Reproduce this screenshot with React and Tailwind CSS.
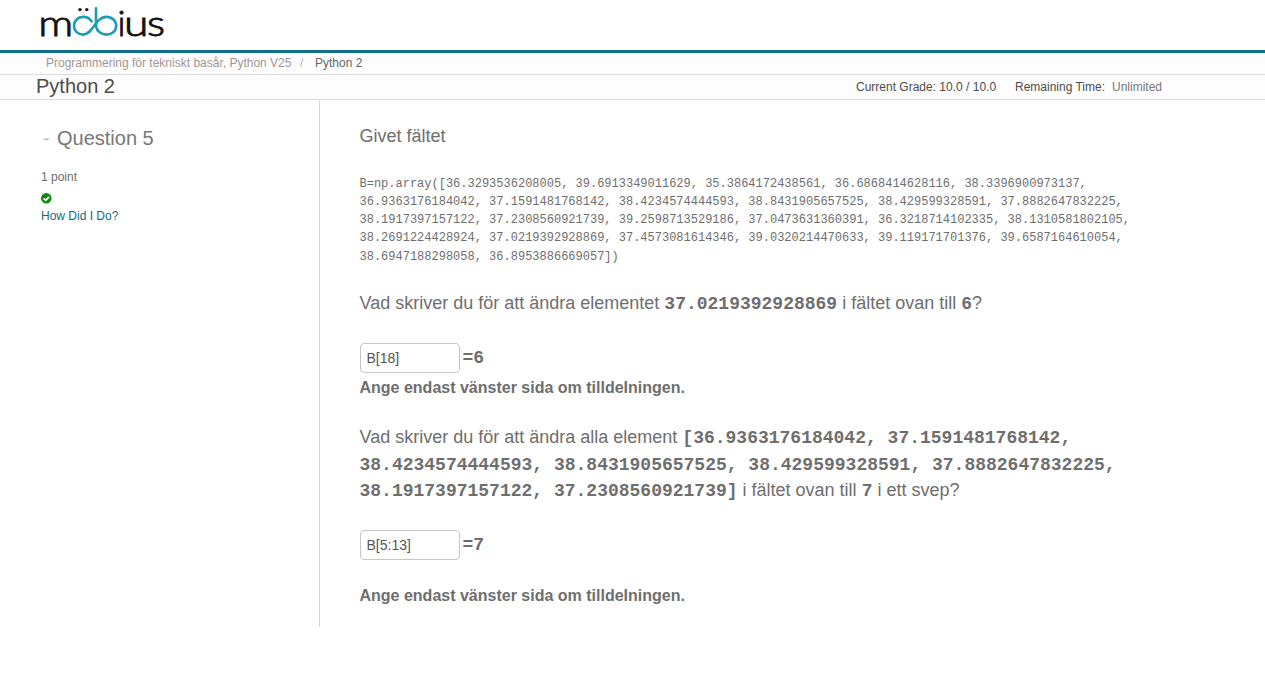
import React from "react";

const sans = "font-['Liberation_Sans',Arial,sans-serif]";
const mono = "font-['Liberation_Mono','Courier_New',monospace]";

const arrayLines = [
  "B=np.array([36.3293536208005, 39.6913349011629, 35.3864172438561, 36.6868414628116, 38.3396900973137,",
  "36.9363176184042, 37.1591481768142, 38.4234574444593, 38.8431905657525, 38.429599328591, 37.8882647832225,",
  "38.1917397157122, 37.2308560921739, 39.2598713529186, 37.0473631360391, 36.3218714102335, 38.1310581802105,",
  "38.2691224428924, 37.0219392928869, 37.4573081614346, 39.0320214470633, 39.119171701376, 39.6587164610054,",
  "38.6947188298058, 36.8953886669057])",
];

function Logo() {
  return (
    <svg width="134" height="48" viewBox="36 0 134 48" role="img" aria-label="möbius">
      <g fill="#111" stroke="#111" strokeWidth="0.9" fontFamily="Lato, sans-serif" fontWeight="300" fontSize="36">
        <text x="38.2" y="35.5" textLength="35" lengthAdjust="spacingAndGlyphs">m</text>
        <text x="117.5" y="35.5">i</text>
        <text x="124" y="35.5" textLength="24.5" lengthAdjust="spacingAndGlyphs">u</text>
        <text x="147" y="35.5" textLength="18" lengthAdjust="spacingAndGlyphs">s</text>
      </g>
      <circle cx="80" cy="9.6" r="1.7" fill="#111" />
      <circle cx="86.8" cy="9.6" r="1.7" fill="#111" />
      <g fill="none" stroke="#1f9bb3" strokeWidth="2.6" strokeLinecap="round">
        <path d="M91.6 21.4 C89.7 18.2 86.8 16.9 83.2 16.9 C77.8 16.9 74 20.8 74 25.8 C74 30.8 77.8 34.6 83.2 34.6 C93 34.6 95 16.9 106.4 16.9 C112.2 16.9 116.2 20.8 116.2 25.8 C116.2 30.8 112.2 34.6 106.6 34.6 C102.6 34.6 99.5 32.6 97.4 30" />
        <path d="M96 8.3 V24 C96 27 96.2 28.4 97.4 30" />
      </g>
    </svg>
  );
}

function Code({ children }) {
  return <b className={`${mono} leading-none`}>{children}</b>;
}

function Answer({ value, result }) {
  return (
    <div className="flex h-[30px] items-center">
      <input
        className={`${sans} h-[30px] w-[100px] rounded-[4px] border border-[#c6c6c6] bg-white px-1.5 text-[14px] text-[#555] outline-none`}
        defaultValue={value}
      />
      <b className={`${mono} ml-[3px] text-[18px] leading-[26px]`}>{result}</b>
    </div>
  );
}

export default function App() {
  return (
    <div className={`${sans} min-h-[691px] bg-white text-[#6e6e6e]`}>
      <header className="h-[53px] border-b-[3px] border-[#11708a] pl-[36px]">
        <Logo />
      </header>
      <nav className="flex h-[22px] items-center border-b border-[#dcdcdc] bg-[#fdfdfd] pb-[2px] pl-[46px] text-[12px]">
        <span className="w-[254px] whitespace-nowrap text-[#a09797]">Programmering för tekniskt basår, Python V25</span>
        <span className="w-[15px] text-[#bbb]">/</span>
        <span className="text-[#666]">Python 2</span>
      </nav>
      <div className="flex h-[25px] items-center border-b border-[#dcdcdc] bg-[#fdfdfd] pl-9 text-[12px] text-[#4c4c4c]">
        <h1 className="w-[820px] pb-[2px] text-[20px] leading-[22px]">Python 2</h1>
        <span className="w-[159px] whitespace-nowrap">Current Grade: 10.0 / 10.0</span>
        <span className="w-[97px] whitespace-nowrap">Remaining Time:</span>
        <span className="text-[#777]">Unlimited</span>
      </div>
      <div className="flex h-[527px]">
        <aside className="w-[320px] shrink-0 border-r border-[#d6d6d6] pl-[41px] pt-[25px] text-[12px]">
          <h2 className="flex h-[26px] items-center text-[20px] text-[#777]">
            <span className="w-4 pl-[2px] text-[#bbb]">-</span>Question 5
          </h2>
          <p className="mt-[17px] h-[18px] leading-[18px]">1 point</p>
          <svg className="mt-[7px]" width="11" height="11" viewBox="0 0 11 11">
            <circle cx="5.3" cy="5.3" r="5.2" fill="#0b8a0b" />
            <path d="M2.7 5.4 L4.7 7.3 L8.1 3.9" fill="none" stroke="#fff" strokeWidth="1.7" />
          </svg>
          <a className="mt-[3px] block h-[18px] leading-[18px] text-[#0b6c89]">How Did I Do?</a>
        </aside>
        <main className="pl-[39.5px] pt-[23px] text-[18px] leading-[26.5px]">
          <p>Givet fältet</p>
          <div className={`${mono} mt-[25px] whitespace-pre text-[12px] leading-[18.25px]`}>
            {arrayLines.map((line) => (
              <div key={line}>{line}</div>
            ))}
          </div>
          <p className="mt-[24px] whitespace-nowrap">
            Vad skriver du för att ändra elementet <Code>37.0219392928869</Code> i fältet ovan till <Code>6</Code>?
          </p>
          <div className="mt-[26.75px]">
            <Answer value="B[18]" result="=6" />
          </div>
          <p className="mt-[2px] text-[16px] font-bold">Ange endast vänster sida om tilldelningen.</p>
          <p className="mt-[22.5px] whitespace-nowrap">
            Vad skriver du för att ändra alla element <Code>[36.9363176184042, 37.1591481768142,</Code>
            <br />
            <Code>38.4234574444593, 38.8431905657525, 38.429599328591, 37.8882647832225,</Code>
            <br />
            <Code>38.1917397157122, 37.2308560921739]</Code> i fältet ovan till <Code>7</Code> i ett svep?
          </p>
          <div className="mt-[26.5px]">
            <Answer value="B[5:13]" result="=7" />
          </div>
          <p className="mt-[23px] text-[16px] font-bold">Ange endast vänster sida om tilldelningen.</p>
        </main>
      </div>
    </div>
  );
}
